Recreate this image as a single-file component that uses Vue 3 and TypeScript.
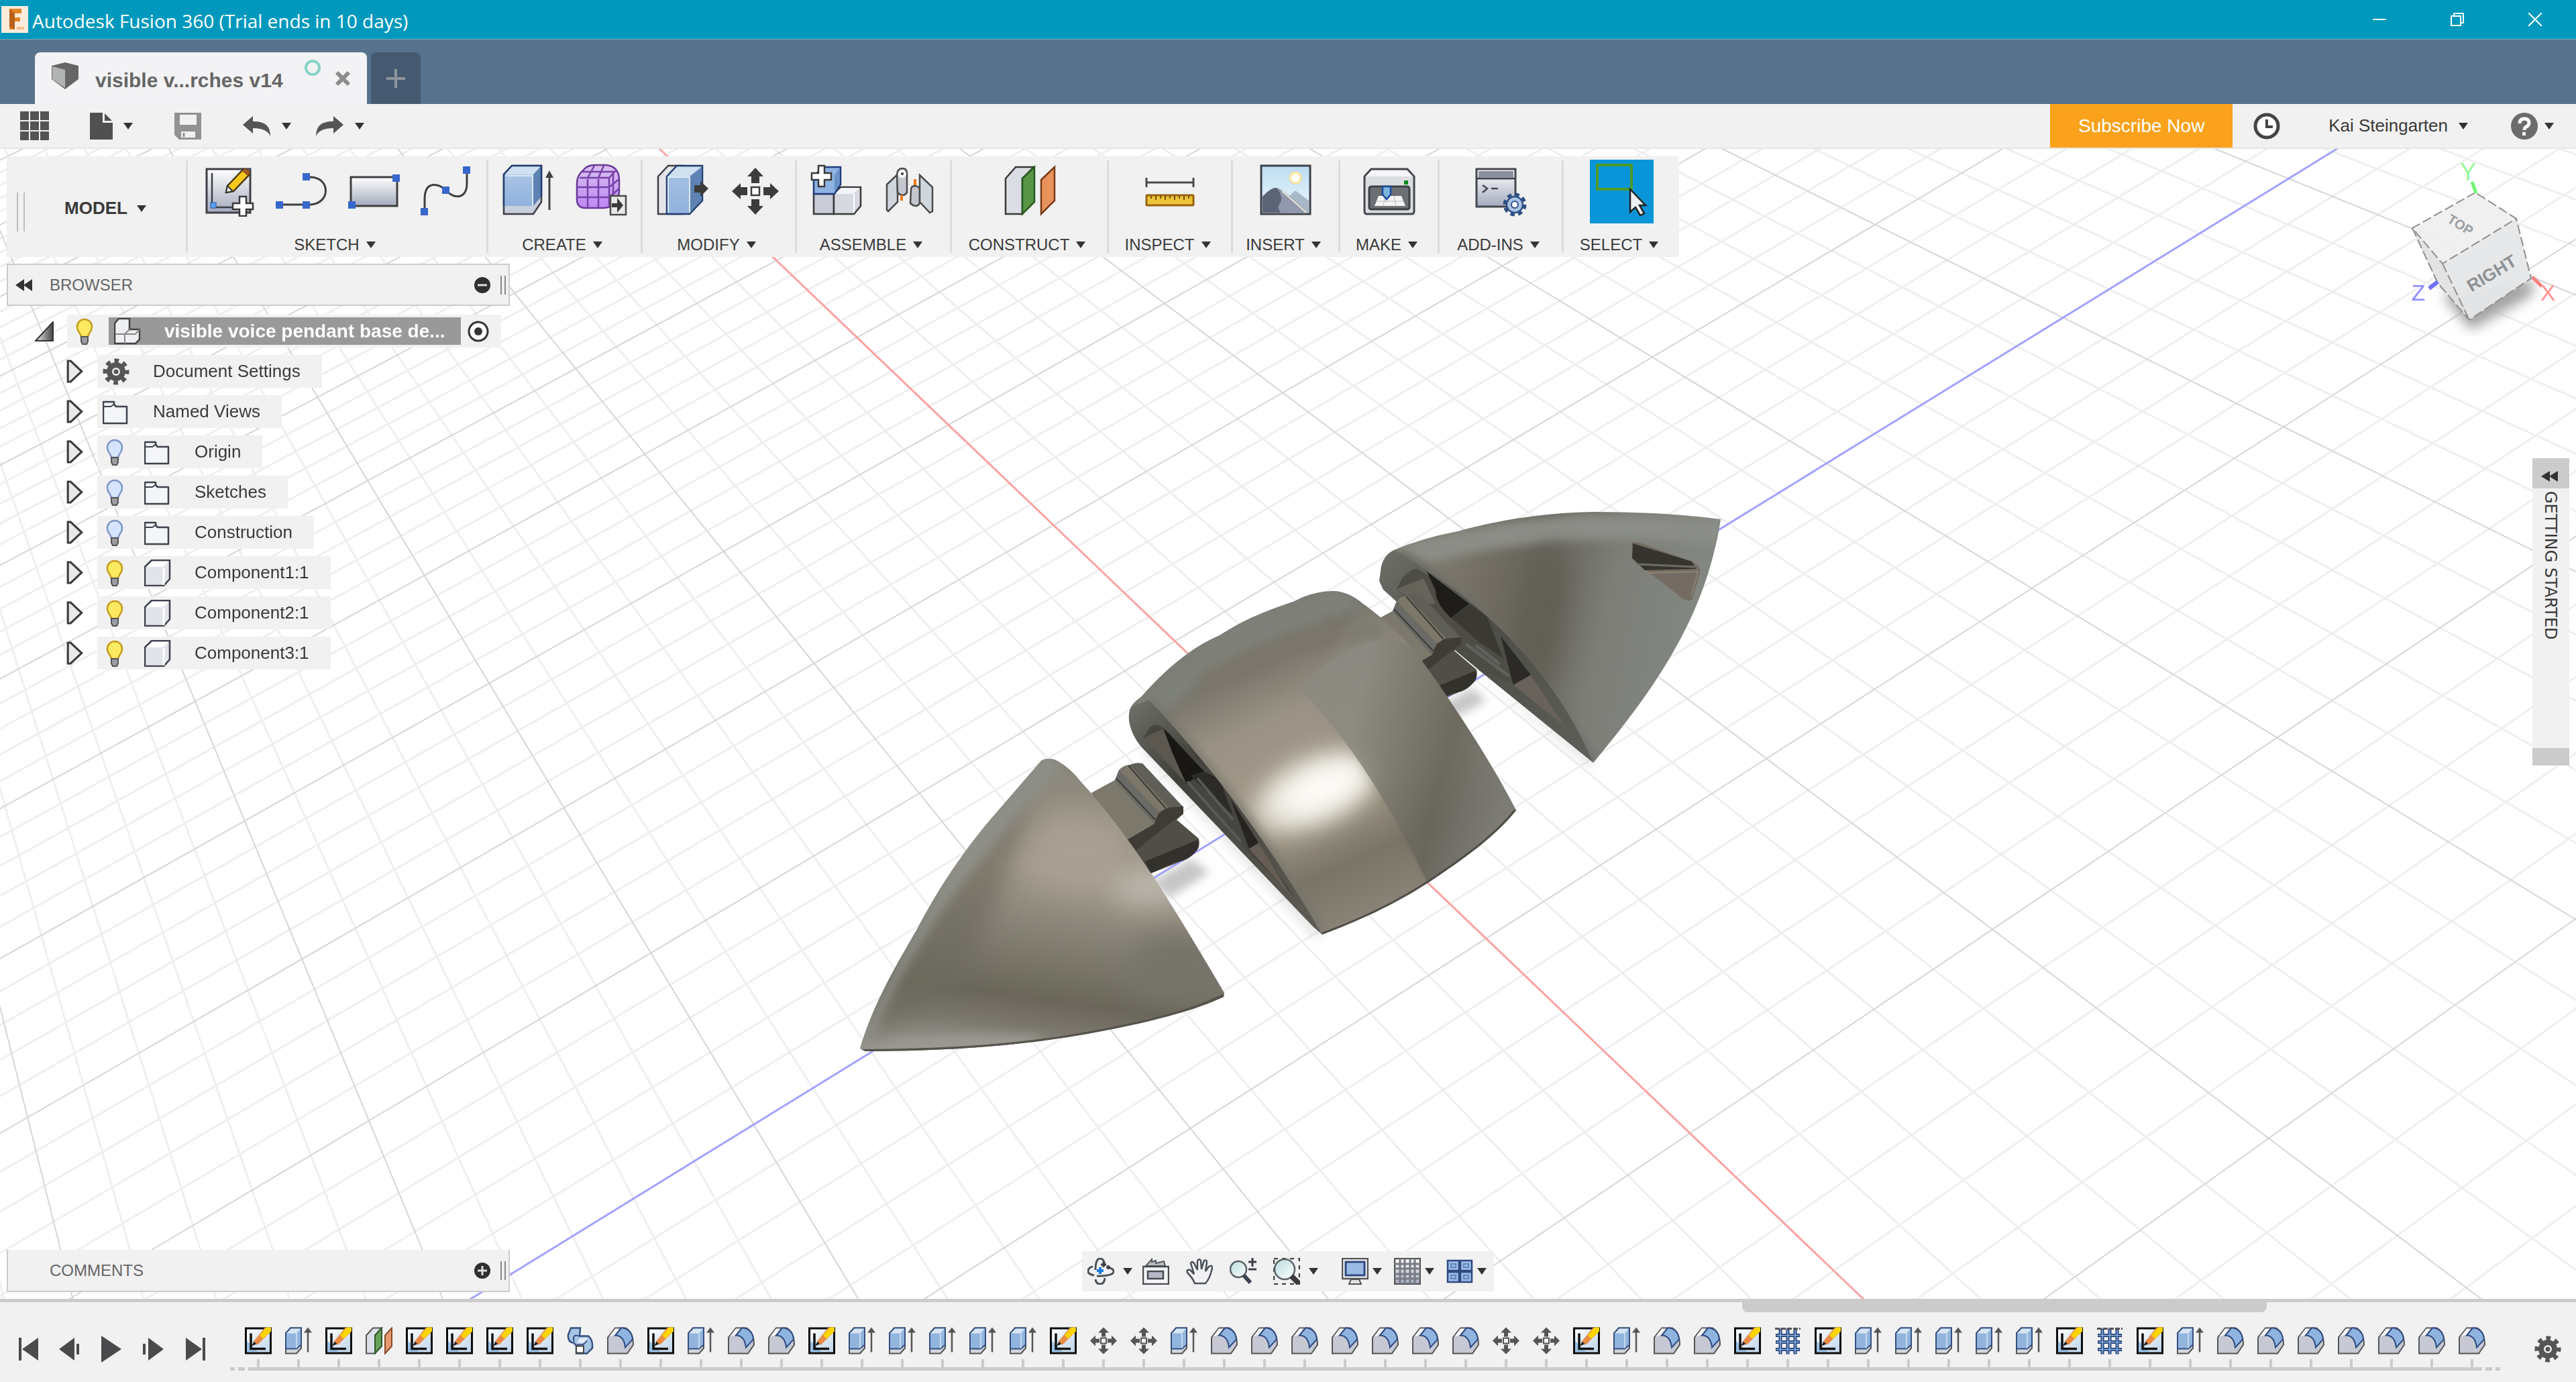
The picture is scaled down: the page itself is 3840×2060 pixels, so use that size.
<script setup lang="ts">
interface RibbonGroup {
  label: string
  width: number
  icons: string[]
  active?: boolean
}
interface TreeNode {
  label: string
  icon: string
  bulb?: 'on' | 'off'
}
interface GridLine {
  x1: number
  y1: number
  x2: number
  y2: number
  major: boolean
}

const groups: RibbonGroup[] = [
  { label: 'SKETCH', width: 448, icons: ['create-sketch', 'line', 'rect', 'spline'] },
  { label: 'CREATE', width: 230, icons: ['extrude', 'form'] },
  { label: 'MODIFY', width: 230, icons: ['press-pull', 'move'] },
  { label: 'ASSEMBLE', width: 231, icons: ['component', 'joint'] },
  { label: 'CONSTRUCT', width: 234, icons: ['plane'] },
  { label: 'INSPECT', width: 185, icons: ['measure'] },
  { label: 'INSERT', width: 160, icons: ['picture'] },
  { label: 'MAKE', width: 148, icons: ['printer'] },
  { label: 'ADD-INS', width: 185, icons: ['script'] },
  { label: 'SELECT', width: 175, icons: ['select'], active: true },
]

const nodes: TreeNode[] = [
  { label: 'Document Settings', icon: 'gear' },
  { label: 'Named Views', icon: 'folder' },
  { label: 'Origin', icon: 'folder', bulb: 'off' },
  { label: 'Sketches', icon: 'folder', bulb: 'off' },
  { label: 'Construction', icon: 'folder', bulb: 'off' },
  { label: 'Component1:1', icon: 'body', bulb: 'on' },
  { label: 'Component2:1', icon: 'body', bulb: 'on' },
  { label: 'Component3:1', icon: 'body', bulb: 'on' },
]

const featureNames: Record<string, string> = {
  s: 'sketch', e: 'extrude', p: 'plane', r: 'revolve', f: 'fillet', m: 'move', g: 'pattern',
}
const features = 'sespssssrfseffseeeeesmmefffffffmmseffsgseeeeesgsefffffff'
  .split('')
  .map((c) => featureNames[c])

const playback = ['first', 'previous', 'play', 'next', 'last']

// Ground grid in perspective: each family of lines runs to its own vanishing point.
const vpX = { x: -727, y: -1410 }
const vpZ = { x: 17608, y: -8478 }
const anchorY = 223
const anchor = (start: number, b: number, c: number, i: number) => (start + b * i) / (1 + c * i)

const gridLines: GridLine[] = []
for (let k = -23; k <= 26; k++) {
  if (k === 0) continue
  const ax = anchor(984, 348.2, -0.0702, k / 5)
  const t = (y: number) => vpX.x + ((ax - vpX.x) * (y - vpX.y)) / (anchorY - vpX.y)
  gridLines.push({ x1: t(200), y1: 200, x2: t(1960), y2: 1960, major: k % 5 === 0 })
}
for (let k = -58; k <= 20; k++) {
  if (k === 0) continue
  const ax = anchor(3482, 311.7, -0.0628, k / 5)
  const t = (x: number) => vpZ.y + ((anchorY - vpZ.y) * (x - vpZ.x)) / (ax - vpZ.x)
  gridLines.push({ x1: -20, y1: t(-20), x2: 3860, y2: t(3860), major: k % 5 === 0 })
}
const minorLines = gridLines.filter((l) => !l.major)
const majorLines = gridLines.filter((l) => l.major)
</script>

<template>
  <svg class="defs" aria-hidden="true">
    <defs>
      <linearGradient id="gSteel" x1="0" y1="0" x2="0" y2="1"><stop offset="0" stop-color="#fff" /><stop offset="1" stop-color="#a4aabd" /></linearGradient>
      <linearGradient id="gBlue" x1="0" y1="0" x2="0" y2="1"><stop offset="0" stop-color="#a9c4e4" /><stop offset="1" stop-color="#8fb1dc" /></linearGradient>
      <linearGradient id="gPurple" x1="0" y1="0" x2="0" y2="1"><stop offset="0" stop-color="#d9c2f0" /><stop offset="1" stop-color="#bd86f5" /></linearGradient>
      <linearGradient id="gSky" x1="0" y1="0" x2="0" y2="1"><stop offset="0" stop-color="#bcdcf2" /><stop offset="1" stop-color="#eef8fd" /></linearGradient>
      <linearGradient id="gPaper" x1="0" y1="0" x2="1" y2="1"><stop offset="0" stop-color="#fff" /><stop offset="1" stop-color="#bcd3ea" /></linearGradient>
      <linearGradient id="gLens" x1="0" y1="0" x2="1" y2="1"><stop offset="0" stop-color="#b8dcdc" /><stop offset="1" stop-color="#fff" /></linearGradient>
      <linearGradient id="gTri" x1="0" y1="0" x2="1" y2="0"><stop offset="0" stop-color="#eee" /><stop offset="1" stop-color="#444" /></linearGradient>
    </defs>

    <!-- ribbon icons -->
    <symbol id="r-create-sketch" viewBox="0 0 80 80">
      <rect x="7" y="9" width="65" height="65" fill="url(#gSteel)" stroke="#3f3f46" stroke-width="3" />
      <path d="M15 15V66H62" fill="none" stroke="#3f3f46" stroke-width="2.5" />
      <rect x="13" y="59" width="8" height="8" fill="#5aa0f0" stroke="#2456a8" />
      <path d="M36 44L38 34L62 9L71 17L47 42Z" fill="#f7c91d" stroke="#4a3a10" stroke-width="2.5" />
      <path d="M60 11L64 8Q68 8 72 15L69 19Z" fill="#a3592c" stroke="#4a3a10" stroke-width="1" />
      <path d="M36 44L38 34L46 42Z" fill="#fff" stroke="#333" stroke-width="2" />
      <path d="M56 50h10v10h10v9h-10v10h-10v-10h-10v-9h10z" fill="#fff" stroke="#3a3a3a" stroke-width="2.5" />
    </symbol>
    <symbol id="r-line" viewBox="0 0 80 80">
      <path d="M7 62H54C84 60 84 22 54 21H47" fill="none" stroke="#3f3f3f" stroke-width="3" />
      <path d="M42 15h11v11h-11zM2 57h11v11h-11zM42 57h11v11h-11z" fill="#3767cc" />
    </symbol>
    <symbol id="r-rect" viewBox="0 0 80 80">
      <rect x="6" y="21" width="69" height="43" fill="url(#gSteel)" stroke="#3f3f3f" stroke-width="3" />
      <path d="M68 17h11v11h-11zM2 57h11v11h-11z" fill="#3767cc" />
    </symbol>
    <symbol id="r-spline" viewBox="0 0 80 80">
      <path d="M8 72V54C8 26 28 30 39 40C54 56 71 52 71 30V10" fill="none" stroke="#3f3f3f" stroke-width="3" />
      <path d="M2 67h11v11h-11zM34 35h11v11h-11zM65 5h11v11h-11z" fill="#3767cc" />
    </symbol>
    <symbol id="r-extrude" viewBox="0 0 80 80">
      <path d="M3 17L15 4H59V58L47 76H3Z" fill="#c9cedb" stroke="#3c3f48" stroke-width="2.5" />
      <path d="M3 17H47V64H3Z" fill="url(#gBlue)" /><path d="M3 17L15 4H59L47 17Z" fill="#cfe0f0" />
      <path d="M47 17L59 4V50L47 64Z" fill="#5e82b4" />
      <path d="M3 64V17L15 4H59V50" fill="none" stroke="#233f70" stroke-width="2.5" />
      <path d="M6 19H46V64" fill="none" stroke="#dbe8f5" stroke-width="2" />
      <path d="M71 70V18" stroke="#444" stroke-width="3" /><path d="M65 22L71 11L77 22Z" fill="#444" />
    </symbol>
    <symbol id="r-form" viewBox="0 0 80 80">
      <path d="M4 30Q4 18 14 10Q20 3 30 3H46Q66 4 67 24V44Q66 52 58 60Q53 67 44 67H16Q5 67 4 56Z" fill="url(#gPurple)" stroke="#6a3a98" stroke-width="2.5" />
      <path d="M4 36H52V67M4 51H52M20 24V67M36 24V67M8 22H52Q52 30 52 36M52 22L63 10M20 22L30 4M36 22L44 4M52 36L67 24M52 51L67 38M58 14V56M12 13H60" fill="none" stroke="#7741a8" stroke-width="2.5" />
      <rect x="54" y="49" width="23" height="28" fill="#e9e9e9" stroke="#4a4a4a" stroke-width="2.5" />
      <path d="M56 60H64V52L73 63L64 74V66H56Z" fill="#3a3a3a" />
    </symbol>
    <symbol id="r-press-pull" viewBox="0 0 80 80">
      <path d="M3 20L18 4H40V76H3Z" fill="#e3e5ea" stroke="#3f3f46" stroke-width="2.5" />
      <path d="M16 20L31 4H69V56L50 76H16Z" fill="url(#gBlue)" stroke="#233f70" stroke-width="2.5" />
      <path d="M18 20L31 6H67L50 20Z" fill="#cfe0f0" /><path d="M50 20L68 6V55L50 74Z" fill="#5e82b4" />
      <path d="M18 74V21H50V74" fill="none" stroke="#dbe8f5" stroke-width="2" />
      <path d="M57 33H66V27L78 38L66 50V44H57Z" fill="#3a3a3a" />
    </symbol>
    <symbol id="r-move" viewBox="0 0 80 80">
      <path d="M40 7L52 20H46V30H34V20H28ZM40 77L52 64H46V54H34V64H28ZM5 42L18 30V36H28V48H18V54ZM75 42L62 30V36H52V48H62V54Z" fill="#3c3c3c" />
      <rect x="34" y="36" width="12" height="12" fill="#fff" stroke="#3c3c3c" stroke-width="2.5" />
    </symbol>
    <symbol id="r-component" viewBox="0 0 80 80">
      <path d="M5 46H35V76H5Z" fill="#c9ccd6" stroke="#3a3a3a" stroke-width="2.5" />
      <path d="M35 46L45 36H75V64L65 76H35Z" fill="#d6d9e0" stroke="#3a3a3a" stroke-width="2.5" /><path d="M36 46L46 37H73L64 46Z" fill="#f3f4f7" /><path d="M65 46V74" stroke="#fff" stroke-width="2" />
      <path d="M5 20L18 6H45V32L36 46H5Z" fill="#8fb3e2" stroke="#1f3c78" stroke-width="2.5" /><path d="M36 18L44 7V31L36 44Z" fill="#6c93c8" />
      <path d="M12 4h9v11h10v10h-10v10h-9v-10h-10v-10h10z" fill="#fff" stroke="#3a3a3a" stroke-width="2.5" />
    </symbol>
    <symbol id="r-joint" viewBox="0 0 80 80">
      <path d="M6 32L22 17V58L8 72L6 70Z" fill="#cfd6dc" stroke="#4a4a4a" stroke-width="2.5" />
      <path d="M21 17Q22 8 29 8Q36 8 36 16V44Q30 52 22 44Z" fill="#c4c8ce" stroke="#4a4a4a" stroke-width="2.5" /><circle cx="29" cy="16" r="6" fill="#fff" /><circle cx="29" cy="16" r="2" fill="#333" />
      <path d="M28 48V56M48 24V38" stroke="#f07a1a" stroke-width="4" />
      <path d="M42 40Q42 34 48 34Q55 35 55 40V60Q50 68 41 60Z" fill="#c4c8ce" stroke="#4a4a4a" stroke-width="2.5" />
      <path d="M55 18L74 36V72L70 74L55 58Z" fill="#cfd6dc" stroke="#4a4a4a" stroke-width="2.5" />
    </symbol>
    <symbol id="r-plane" viewBox="0 0 80 80">
      <path d="M4 23L19 6H46L29 23V76H4Z" fill="#dadde3" stroke="#3a3a3a" stroke-width="2.5" />
      <path d="M29 23L47 6V58L29 76Z" fill="#5a9646" stroke="#275a20" stroke-width="2.5" />
      <path d="M57 25L77 6V56L57 76Z" fill="#e8925c" stroke="#7a3a18" stroke-width="2.5" />
    </symbol>
    <symbol id="r-measure" viewBox="0 0 80 80">
      <path d="M5 22V36M75 22V36M5 29H75" stroke="#4a4a4a" stroke-width="3" />
      <rect x="5" y="48" width="70" height="15" rx="1" fill="#ecc53a" stroke="#99630e" stroke-width="3" />
      <path d="M12 49v4M19 49v6M26 49v4M33 49v6M40 49v4M47 49v6M54 49v4M61 49v6M68 49v4" stroke="#7a4d08" stroke-width="2" />
    </symbol>
    <symbol id="r-picture" viewBox="0 0 80 80">
      <rect x="3" y="4" width="73" height="72" fill="url(#gSky)" stroke="#3c4048" stroke-width="3" />
      <circle cx="54" cy="22" r="8" fill="#fff" stroke="#fbe39a" stroke-width="3" />
      <path d="M44 50L54 41L74 56V74H44Z" fill="#a9b8c6" />
      <path d="M5 50Q18 36 26 37Q38 40 72 74H5Z" fill="#8f98ac" /><path d="M5 50Q18 36 26 37Q34 46 33 56L28 66L32 74H5Z" fill="#5d6475" />
      <path d="M34 42Q50 55 70 74" fill="none" stroke="#f2ecd8" stroke-width="2" />
    </symbol>
    <symbol id="r-printer" viewBox="0 0 80 80">
      <path d="M3 20L13 9H67L77 20V72Q77 76 73 76H7Q3 76 3 72Z" fill="#dcdde0" stroke="#43474f" stroke-width="3" />
      <path d="M5 20L14 11H66L75 20Z" fill="#f6f6fa" /><rect x="62" y="26" width="6" height="6" fill="#0a8a1a" />
      <rect x="10" y="35" width="60" height="34" rx="3" fill="#6c6f73" stroke="#3c4046" stroke-width="3" />
      <path d="M24 49H58L64 64H18Z" fill="#f4f4f4" /><path d="M21 57H61M34 49L31 64M47 49L50 64" stroke="#bbb" stroke-width="1" />
      <path d="M30 35H42V47L36 54L30 47Z" fill="#7db5dc" stroke="#1c4aa0" stroke-width="2.5" />
    </symbol>
    <symbol id="r-script" viewBox="0 0 80 80">
      <rect x="4" y="9" width="58" height="56" fill="url(#gSteel)" stroke="#44474f" stroke-width="3" />
      <rect x="7" y="12" width="52" height="9" fill="#8b90a0" /><path d="M4 23H62" stroke="#44474f" stroke-width="3" />
      <path d="M13 33L20 38L13 44M26 38H36" fill="none" stroke="#44474f" stroke-width="2.5" />
      <circle cx="61" cy="62" r="14" fill="none" stroke="#2f4f86" stroke-width="7" stroke-dasharray="6 5" />
      <circle cx="61" cy="62" r="12" fill="#a9c3e4" stroke="#2f4f86" stroke-width="2.5" /><circle cx="61" cy="62" r="5" fill="#fff" stroke="#2f4f86" stroke-width="2" />
    </symbol>
    <symbol id="r-select" viewBox="0 0 80 80">
      <rect x="4" y="3" width="51" height="36" fill="none" stroke="#4e9a2a" stroke-width="4" />
      <path d="M53 39V73L61 66L68 78L74 75L67 63H76Z" fill="#eceef4" stroke="#222" stroke-width="2.5" />
    </symbol>

    <!-- timeline icons -->
    <symbol id="t-sketch" viewBox="0 0 40 40">
      <rect x="1.5" y="1.5" width="37" height="37" fill="url(#gPaper)" stroke="#0c0c0c" stroke-width="3" />
      <path d="M3 20L20 37H3Z" fill="#6aa5dc" opacity=".6" /><path d="M9 9V32H31" fill="none" stroke="#111" stroke-width="3.5" />
      <path d="M10 28L14 20L22 23Z" fill="#222" /><path d="M13 21L30 0L38 7L19 26Z" fill="#e98b45" /><path d="M22 12L32 0H39V6L27 17Z" fill="#fbd500" />
    </symbol>
    <symbol id="t-extrude" viewBox="0 0 40 40">
      <path d="M1 9L8 1H24V31L17 39H1Z" fill="#d3d7e0" stroke="#555" stroke-width="2" />
      <path d="M1 9L8 1H24V26L17 32H1Z" fill="#92b5de" stroke="#35507f" stroke-width="2" /><path d="M2 9L9 2H23L17 9Z" fill="#d8e6f4" /><path d="M17 9V31" stroke="#d8e6f4" stroke-width="1.5" />
      <path d="M34 37V6" stroke="#555" stroke-width="2.5" /><path d="M28 8L34 0L40 8Z" fill="#555" />
    </symbol>
    <symbol id="t-plane" viewBox="0 0 40 40">
      <path d="M1 12L11 1H24L14 12V39H1Z" fill="#dcdfe8" stroke="#555" stroke-width="2" /><path d="M14 12L24 1V28L14 39Z" fill="#68a05a" stroke="#2c5a28" stroke-width="2" />
      <path d="M29 12L39 1V28L29 39Z" fill="#e89b70" stroke="#8a4a28" stroke-width="2" />
    </symbol>
    <symbol id="t-revolve" viewBox="0 0 40 40">
      <path d="M6 1H20L19 13H32Q39 18 38 31L30 39H14V27L10 23Q1 22 2 11Z" fill="#a9c5e6" stroke="#35507f" stroke-width="2.5" />
      <path d="M11 21Q8 14 13 12L19 13M15 26H24L30 20" fill="none" stroke="#35507f" stroke-width="2" /><path d="M20 16H31L26 23H15Z" fill="#e3eef8" />
      <rect x="14" y="28" width="11" height="10" fill="#fff" stroke="#444" stroke-width="2" />
    </symbol>
    <symbol id="t-fillet" viewBox="0 0 40 40">
      <path d="M1 15L12 1H28Q39 8 39 26L30 39H1Z" fill="#c6c9d4" stroke="#555" stroke-width="2" /><path d="M3 14L12 2H18L12 11Z" fill="#f4f4f6" />
      <path d="M12 12Q25 12 27 30L38 18Q37 4 24 1H21Z" fill="#8fb4e0" stroke="#2f4a80" stroke-width="2" />
    </symbol>
    <symbol id="t-move" viewBox="0 0 40 40">
      <path d="M20 0L28 8H23V14H17V8H12ZM20 40L28 32H23V26H17V32H12ZM0 20L8 12V17H14V23H8V28ZM40 20L32 12V17H26V23H32V28Z" fill="#555" />
      <rect x="16" y="16" width="8" height="8" fill="#f4f4f4" stroke="#555" stroke-width="2" />
    </symbol>
    <symbol id="t-pattern" viewBox="0 0 40 40">
      <path d="M9 2V40M20 2V40M31 2V40M2 12H38M2 22H38M2 33H38" stroke="#24427c" stroke-width="5" /><path d="M9 4V39M20 4V39M31 4V39M3 12H37M3 22H37M3 33H37" stroke="#8db2e0" stroke-width="1.5" />
      <path d="M1 2H39" stroke="#555" stroke-width="3" stroke-dasharray="7 2" />
    </symbol>

    <!-- playback -->
    <symbol id="p-first" viewBox="0 0 40 40"><path d="M6 3h4v34h-4zM11 20L35 3V37Z" fill="#4a4a4c" /></symbol>
    <symbol id="p-previous" viewBox="0 0 40 40"><path d="M4 20L27 3V37ZM30 12h4v16h-4z" fill="#4a4a4c" /></symbol>
    <symbol id="p-play" viewBox="0 0 40 40"><path d="M5 0L35 20L5 40Z" fill="#4a4a4c" /></symbol>
    <symbol id="p-next" viewBox="0 0 40 40"><path d="M36 20L13 3V37ZM5 12h4v16h-4z" fill="#4a4a4c" /></symbol>
    <symbol id="p-last" viewBox="0 0 40 40"><path d="M32 3h4v34h-4zM31 20L7 3V37Z" fill="#4a4a4c" /></symbol>

    <!-- browser icons -->
    <symbol id="b-gear" viewBox="0 0 40 40">
      <circle cx="20" cy="20" r="16" fill="none" stroke="#555" stroke-width="7" stroke-dasharray="6.5 6.07" stroke-dashoffset="3" />
      <circle cx="20" cy="20" r="10" fill="none" stroke="#555" stroke-width="8" /><circle cx="20" cy="20" r="3.5" fill="#555" />
    </symbol>
    <symbol id="b-folder" viewBox="0 0 40 40"><path d="M1 5H17V9L20 12H36V37H1Z" fill="#f4f5f8" stroke="#3e424c" stroke-width="2.5" stroke-linejoin="round" /><path d="M2 12H12L18 8" fill="none" stroke="#3e424c" stroke-width="2" /></symbol>
    <symbol id="b-body" viewBox="0 0 40 40"><path d="M1 11L11 1H38V29L29 39H1Z" fill="#e2e4e9" stroke="#3e424c" stroke-width="2.5" /><path d="M3 11L12 3H36L28 11Z" fill="#fff" /><path d="M29 12V38" stroke="#fff" stroke-width="3" /></symbol>
    <symbol id="b-asm" viewBox="0 0 40 40"><path d="M1 8L7 1H23V17H38V32L32 38H1Z" fill="#eeeff2" stroke="#444" stroke-width="2.5" /><path d="M16 38V24L23 17M17 24H32L38 17M2 24H16" fill="none" stroke="#888" stroke-width="2" /></symbol>
    <symbol id="b-on" viewBox="0 0 40 40"><path d="M18 2a11 11 0 0 1 11 12c0 6-5 8-6 14h-10c-1-6-6-8-6-14a11 11 0 0 1 11-12z" fill="#fdea62" stroke="#c69a1c" stroke-width="2.5" /><path d="M13 28h10v7l-2 4h-6l-2-4z" fill="#9a9da4" stroke="#555" stroke-width="2" /></symbol>
    <symbol id="b-off" viewBox="0 0 40 40"><path d="M18 2a11 11 0 0 1 11 12c0 6-5 8-6 14h-10c-1-6-6-8-6-14a11 11 0 0 1 11-12z" fill="#d6e4ff" stroke="#7d97c8" stroke-width="2.5" /><path d="M13 28h10v7l-2 4h-6l-2-4z" fill="#9a9da4" stroke="#555" stroke-width="2" /></symbol>
  </svg>

  <div class="app">
    <header class="titlebar">
      <svg class="logo" viewBox="0 0 40 40"><rect width="40" height="40" fill="#fdebdc" /><path d="M12 4H30V11H20V17H28V23H20V35H12Z" fill="#e08526" /><path d="M12 4L20 11V35L12 30Z" fill="#b8601a" /><path d="M23 31h11v4h-11z" fill="#f6bf8e" /></svg>
      <h1>Autodesk Fusion 360 (Trial ends in 10 days)</h1>
      <div class="window-buttons">
        <button aria-label="Minimize"><svg viewBox="0 0 20 20"><path d="M0 10H20" stroke="#fff" stroke-width="2" /></svg></button>
        <button aria-label="Restore"><svg viewBox="0 0 20 20"><path d="M1 5H15V19H1ZM5 5V1H19V15H15" fill="none" stroke="#fff" stroke-width="2" /></svg></button>
        <button aria-label="Close"><svg viewBox="0 0 20 20"><path d="M0 0L20 20M20 0L0 20" stroke="#fff" stroke-width="2" /></svg></button>
      </div>
    </header>

    <nav class="tabs">
      <div class="tab">
        <svg class="cube" viewBox="0 0 40 40"><path d="M0 5L20 0L40 5V25L20 40L0 25Z" fill="#666" /><path d="M1 6L20 11V38L1 25Z" fill="#b2b4b4" /></svg>
        <span class="tab-name">visible v...rches v14</span>
        <svg class="sync" viewBox="0 0 26 26"><circle cx="13" cy="13" r="10" fill="none" stroke="#86d2c4" stroke-width="4" /></svg>
        <button class="tab-close" aria-label="Close tab"><svg viewBox="0 0 24 24"><path d="M3 3L21 21M21 3L3 21" stroke="#8c8c8c" stroke-width="6" /></svg></button>
      </div>
      <button class="tab-add" aria-label="New tab"><svg viewBox="0 0 28 28"><path d="M14 0V28M0 14H28" stroke="#8e959d" stroke-width="4" /></svg></button>
    </nav>

    <div class="toolbar">
      <button class="tool apps" aria-label="Data panel"><svg width="44" height="44" viewBox="0 0 44 44"><path d="M0 0h13v13h-13zM15 0h13v13h-13zM30 0h13v13h-13zM0 15h13v13h-13zM15 15h13v13h-13zM30 15h13v13h-13zM0 30h13v13h-13zM15 30h13v13h-13zM30 30h13v13h-13z" fill="#545454" /></svg></button>
      <button class="tool file" aria-label="File"><svg width="34" height="40" viewBox="0 0 34 40"><path d="M0 0H19V15H34V40H0ZM22 1L33 12H22Z" fill="#505050" /></svg><i class="caret"></i></button>
      <button class="tool save" aria-label="Save"><svg width="40" height="40" viewBox="0 0 40 40"><path fill-rule="evenodd" d="M0 0H40V40H7L0 33ZM8 3V18H33V3ZM10 28V37H31V28Z" fill="#929292" /><path d="M14 30v6" stroke="#929292" stroke-width="3" /></svg></button>
      <button class="tool undo" aria-label="Undo"><svg width="42" height="32" viewBox="0 0 42 32"><path d="M0 14L15 1V9Q41 8 41 31Q36 19 15 19V27Z" fill="#555" /></svg><i class="caret"></i></button>
      <button class="tool redo" aria-label="Redo"><svg width="42" height="32" viewBox="0 0 42 32"><path d="M41 14L26 1V9Q0 8 0 31Q5 19 26 19V27Z" fill="#555" /></svg><i class="caret"></i></button>
      <div class="account">
        <button class="subscribe">Subscribe Now</button>
        <button class="tool clock" aria-label="Job status"><svg width="40" height="40" viewBox="0 0 40 40"><circle cx="20" cy="20" r="17" fill="#fff" stroke="#444" stroke-width="5" /><path d="M20 10V21H29" fill="none" stroke="#444" stroke-width="4" /></svg></button>
        <button class="tool user">Kai Steingarten<i class="caret"></i></button>
        <button class="tool help" aria-label="Help"><svg width="40" height="40" viewBox="0 0 40 40"><circle cx="20" cy="20" r="20" fill="#6c6c6c" /><path d="M13 16Q13 9 20 9Q27 9 27 15Q27 19 23 21Q20 22 20 26" fill="none" stroke="#fff" stroke-width="5" /><rect x="17" y="29" width="5" height="5" fill="#fff" /></svg><i class="caret"></i></button>
      </div>
    </div>

    <main class="stage">
      <svg class="scene" viewBox="0 222 3840 1714" preserveAspectRatio="xMidYMid slice" role="img" aria-label="Model view">
        <defs>
          <filter id="b8" x="-50%" y="-50%" width="200%" height="200%"><feGaussianBlur stdDeviation="7" /></filter>
          <filter id="b20" x="-80%" y="-80%" width="260%" height="260%"><feGaussianBlur stdDeviation="18" /></filter>
          <linearGradient id="cone" gradientUnits="userSpaceOnUse" x1="1560" y1="1140" x2="1500" y2="1570">
            <stop offset="0" stop-color="#8a867a" /><stop offset=".35" stop-color="#a69d90" /><stop offset=".55" stop-color="#898478" /><stop offset=".8" stop-color="#6a665a" /><stop offset=".9" stop-color="#7b776d" /><stop offset="1" stop-color="#94928a" />
          </linearGradient>
          <linearGradient id="mid" gradientUnits="userSpaceOnUse" x1="1860" y1="930" x2="2060" y2="1370">
            <stop offset="0" stop-color="#7c7e76" /><stop offset=".12" stop-color="#78746a" /><stop offset=".3" stop-color="#9a9285" /><stop offset=".6" stop-color="#a39a88" /><stop offset=".8" stop-color="#7a7467" /><stop offset="1" stop-color="#8c867a" />
          </linearGradient>
          <linearGradient id="midR" gradientUnits="userSpaceOnUse" x1="2010" y1="1100" x2="2250" y2="1160">
            <stop offset="0" stop-color="#8b8981" /><stop offset=".3" stop-color="#79766c" /><stop offset=".6" stop-color="#66635a" /><stop offset="1" stop-color="#7c7d76" />
          </linearGradient>
          <linearGradient id="tail" gradientUnits="userSpaceOnUse" x1="2150" y1="880" x2="2520" y2="960">
            <stop offset="0" stop-color="#7c776c" /><stop offset=".35" stop-color="#66625a" /><stop offset=".65" stop-color="#7c7e77" /><stop offset="1" stop-color="#838781" />
          </linearGradient>
          <linearGradient id="face" gradientUnits="userSpaceOnUse" x1="1690" y1="1050" x2="1960" y2="1380"><stop offset="0" stop-color="#6b6d66" /><stop offset=".3" stop-color="#40403a" /><stop offset="1" stop-color="#5e5c54" /></linearGradient>
          <linearGradient id="face2" gradientUnits="userSpaceOnUse" x1="2060" y1="830" x2="2370" y2="1130"><stop offset="0" stop-color="#6b6d66" /><stop offset=".4" stop-color="#4b4c46" /><stop offset="1" stop-color="#5e5f58" /></linearGradient>
          <clipPath id="coneClip"><path d="M1282 1563C1300 1500 1335 1440 1366 1387C1400 1322 1440 1262 1489 1207L1552 1134Q1558 1129 1572 1132C1590 1141 1602 1153 1611 1165C1690 1250 1760 1370 1825 1480L1824 1486C1780 1506 1740 1515 1709 1523C1600 1548 1490 1566 1290 1567Z" /></clipPath>
          <clipPath id="midClip"><path d="M1686 1054Q1690 1046 1701 1039C1735 1000 1775 965 1818 947C1860 920 1890 910 1930 896Q1955 882 1985 881Q2008 880 2032 900C2080 935 2100 960 2118 983C2160 1040 2220 1130 2260 1208C2230 1245 2190 1275 2130 1315C2080 1348 2020 1375 1971 1393Q1860 1200 1713 1043Z" /></clipPath>
          <clipPath id="tailClip"><path d="M2078 820Q2120 802 2173 792Q2270 765 2375 763Q2480 763 2565 774C2545 900 2490 1000 2375 1137Q2290 940 2078 820Z" /></clipPath>
          <g id="clip">
            <path d="M1627 1182L1662 1163L1668 1148Q1680 1138 1703 1138L1764 1205V1213L1754 1222L1787 1250Q1790 1262 1782 1270L1758 1285L1715 1302L1690 1280Z" fill="#504e46" />
            <path d="M1627 1182L1662 1163L1721 1228L1680 1252Z" fill="#7c786b" />
            <path d="M1662 1163L1668 1148L1728 1210L1721 1228Z" fill="#6a6a66" />
            <path d="M1668 1148Q1675 1140 1684 1140L1742 1204L1728 1211Z" fill="#7d7769" />
            <path d="M1684 1140Q1694 1136 1703 1138L1764 1203L1742 1204Z" fill="#5f5f58" />
            <path d="M1664 1160L1722 1222M1682 1141L1738 1205" stroke="#3c3a36" stroke-width="2" />
            <path d="M1680 1252L1721 1228Q1726 1208 1742 1204L1764 1202V1213Q1745 1225 1693 1268Z" fill="#3f3b35" />
            <path d="M1707 1284L1785 1252Q1790 1262 1782 1270Q1770 1284 1752 1285L1715 1302Z" fill="#33312c" />
          </g>
        </defs>

        <rect x="0" y="222" width="3840" height="1714" fill="#fff" />
        <g stroke="#efefef" stroke-width="3"><line v-for="(l, i) in minorLines" :key="i" :x1="l.x1" :y1="l.y1" :x2="l.x2" :y2="l.y2" /></g>
        <g stroke="#d6d6d6" stroke-width="2"><line v-for="(l, i) in majorLines" :key="i" :x1="l.x1" :y1="l.y1" :x2="l.x2" :y2="l.y2" /></g>
        <g filter="url(#b8)" fill="#c6c6c6">
          <path d="M1715 1315L1775 1280L1803 1300L1745 1338Z" /><path d="M2150 1050L2195 1025L2215 1045L2170 1070Z" />
          <path d="M1700 1120L1960 1400L1975 1392L1720 1110Z" opacity=".4" /><path d="M2200 1000L2370 1145L2380 1130Z" opacity=".4" />
        </g>
        <line x1="676" y1="1952" x2="3490" y2="218" stroke="#a2a2ff" stroke-width="3" />
        <line x1="974" y1="213" x2="2790" y2="1948" stroke="#ffa2a2" stroke-width="3" />

        <!-- tail piece -->
        <path d="M2056 866L2059 844Q2064 826 2078 820L2120 810Q2310 930 2375 1137L2206 1000L2081 896L2062 879Z" fill="url(#face2)" />
        <path d="M2082 878L2090 862Q2105 846 2114 848L2216 918L2240 970L2282 1005L2334 1084L2262 1020L2206 1000Z" fill="#4d4c45" />
        <path d="M2127 852L2190 900L2163 921Q2140 900 2140 880Z" fill="#1d1c19" /><path d="M2163 921L2190 900L2216 918L2240 980L2206 958Z" fill="#3b3934" />
        <path d="M2082 878L2122 862L2140 900L2110 900Z" fill="#66635a" /><path d="M2237 948L2282 1006L2256 1021Z" fill="#2c2a27" /><path d="M2256 1021L2282 1006L2334 1084Z" fill="#68625a" />
        <path d="M2185 960L2250 1008M2200 962L2236 990" stroke="#5f625c" stroke-width="5" />
        <g clip-path="url(#tailClip)">
          <rect x="2050" y="750" width="530" height="400" fill="url(#tail)" />
          <path d="M2070 815Q2280 765 2380 768L2570 778V810Q2300 790 2130 840Z" fill="#8b8e87" filter="url(#b8)" />
          <path d="M2080 825Q2230 900 2375 1140" fill="none" stroke="#6a6b65" stroke-width="14" filter="url(#b8)" />
          <ellipse cx="2300" cy="930" rx="34" ry="120" fill="#625e54" filter="url(#b20)" transform="rotate(10 2300 930)" />
        </g>
        <path d="M2433 809Q2440 806 2450 811L2520 836Q2536 842 2534 854L2523 893Q2517 898 2508 892L2454 850L2433 832Z" fill="#746c62" />
        <path d="M2434 810L2522 837L2528 848L2452 850L2433 832Z" fill="#36342f" /><path d="M2440 841L2526 845" stroke="#6d6d65" stroke-width="3" /><path d="M2455 854L2531 852L2521 890" fill="none" stroke="#8d8375" stroke-width="2" />
        <use href="#clip" x="414" y="-252" />

        <!-- centre piece -->
        <path d="M1683 1074Q1682 1060 1686 1054L1701 1039L1740 1050Q1880 1200 1971 1393L1958 1382L1701 1113Q1686 1095 1683 1074Z" fill="url(#face)" />
        <path d="M1704 1100L1714 1084Q1724 1076 1735 1086L1818 1161L1840 1205L1876 1262L1931 1338L1860 1270L1770 1170Z" fill="#474540" />
        <path d="M1735 1086L1795 1150L1769 1168L1750 1130Z" fill="#181714" /><path d="M1704 1100L1733 1087L1766 1165Z" fill="#5c584f" />
        <path d="M1774 1156L1795 1150L1818 1161L1838 1215Z" fill="#2d2b27" /><path d="M1834 1190L1876 1256L1862 1265Z" fill="#262420" /><path d="M1862 1265L1876 1257L1925 1336Z" fill="#665d55" />
        <path d="M1770 1165L1850 1255M1785 1160L1838 1222" stroke="#565b56" stroke-width="4" />
        <g clip-path="url(#midClip)">
          <rect x="1670" y="870" width="600" height="540" fill="url(#mid)" />
          <path d="M1690 1045L1820 945L2000 880L2030 905Q1850 950 1730 1070Z" fill="#7e8179" filter="url(#b8)" />
          <path d="M1780 1010Q1900 940 2050 925L2060 950Q1900 970 1800 1030Z" fill="#7b766a" filter="url(#b8)" />
          <ellipse cx="1960" cy="1180" rx="95" ry="48" fill="#e9e5db" filter="url(#b20)" transform="rotate(-24 1960 1180)" />
          <ellipse cx="1972" cy="1174" rx="66" ry="26" fill="#fffefa" filter="url(#b20)" transform="rotate(-24 1972 1174)" />
          <path d="M1950 1038Q2040 1130 2130 1320L2280 1250V1150L2100 930L2030 900L1990 960Z" fill="url(#midR)" filter="url(#b8)" opacity=".35" />
          <path d="M1940 1030Q2040 1130 2130 1320L2280 1250V1150L2130 980Q2080 940 2030 960Q1960 990 1940 1030Z" fill="url(#midR)" opacity=".8" />
          <path d="M1713 1043Q1860 1200 1971 1393" fill="none" stroke="#74736a" stroke-width="10" filter="url(#b8)" />
          <path d="M2260 1208C2230 1245 2190 1275 2130 1315C2080 1348 2020 1375 1971 1393" fill="none" stroke="#4f4d47" stroke-width="6" />
        </g>

        <!-- nose piece -->
        <use href="#clip" />
        <g clip-path="url(#coneClip)">
          <rect x="1270" y="1120" width="570" height="460" fill="url(#cone)" />
          <path d="M1290 1560Q1340 1390 1540 1170Q1500 1350 1420 1470Z" fill="#6e6a5f" opacity=".7" filter="url(#b20)" />
          <ellipse cx="1610" cy="1270" rx="70" ry="56" fill="#a99f92" filter="url(#b20)" />
          <ellipse cx="1715" cy="1322" rx="60" ry="26" fill="#b9b6aa" filter="url(#b20)" transform="rotate(-8 1715 1322)" />
          <ellipse cx="1760" cy="1440" rx="80" ry="50" fill="#77736a" filter="url(#b20)" />
          <path d="M1278 1570Q1340 1400 1489 1200L1560 1125L1580 1145Q1480 1250 1410 1345Q1340 1450 1290 1560Z" fill="#8d8f88" filter="url(#b8)" />
          <path d="M1285 1560Q1420 1535 1560 1545L1500 1570H1285Z" fill="#9a9891" filter="url(#b8)" />
          <path d="M1825 1484C1780 1506 1740 1515 1709 1523C1600 1548 1490 1566 1285 1567" fill="none" stroke="#55534c" stroke-width="6" />
        </g>
      </svg>

      <svg class="viewcube" viewBox="3560 222 280 280" role="img" aria-label="View cube">
        <defs><filter id="vb" x="-30%" y="-30%" width="160%" height="160%"><feGaussianBlur stdDeviation="9" /></filter></defs>
        <path d="M3640 440L3684 492L3775 440L3775 415Z" fill="#a4a4a4" filter="url(#vb)" />
        <path d="M3690 287L3596 340L3641 393L3751 326Z" fill="#efefef" opacity=".93" />
        <path d="M3596 340L3641 393L3681 477L3632 420Z" fill="#e2e2e2" opacity=".95" />
        <path d="M3641 393L3751 326L3773 415L3681 477Z" fill="#e6e7e8" opacity=".95" />
        <path d="M3690 287L3596 340L3641 393L3751 326ZM3596 340L3634 422L3681 477L3773 415L3751 326M3641 393L3681 477" fill="none" stroke="#8f8f8f" stroke-width="2" stroke-dasharray="14 5" />
        <path d="M3685 271L3691 288" stroke="#73f573" stroke-width="5" /><path d="M3621 430L3634 420" stroke="#7272fa" stroke-width="6" /><path d="M3775 413L3789 427" stroke="#fa8080" stroke-width="5" />
        <g font-family="Liberation Sans, Arial, sans-serif" text-anchor="middle">
          <text x="3679" y="269" font-size="36" fill="#97f797">Y</text><text x="3605" y="448" font-size="34" fill="#8c8cff">Z</text><text x="3798" y="448" font-size="34" fill="#ff9292">X</text>
          <text transform="translate(3719 415) rotate(-31)" font-size="26" font-weight="700" fill="#8e9196">RIGHT</text>
          <text transform="translate(3664 341) rotate(32)" font-size="20" font-weight="700" fill="#9b9ea3">TOP</text>
        </g>
      </svg>

      <section class="ribbon" aria-label="Ribbon">
        <div class="workspace"><span class="grip"></span><button class="model">MODEL<i class="caret"></i></button></div>
        <div v-for="g in groups" :key="g.label" class="group" :style="{ width: g.width + 'px' }">
          <div class="group-icons">
            <button v-for="icon in g.icons" :key="icon" :class="['big', { active: g.active }]" :aria-label="icon"><svg><use :href="'#r-' + icon" /></svg></button>
          </div>
          <button class="group-label">{{ g.label }}<i class="caret"></i></button>
        </div>
      </section>

      <section class="panel browser">
        <button class="collapse" aria-label="Collapse"><svg width="26" height="18" viewBox="0 0 26 18"><path d="M0 9L13 0V18ZM12 9L25 0V18Z" fill="#333" /></svg></button>
        <h2>BROWSER</h2>
        <button class="round" aria-label="Minimize browser"><svg width="24" height="24" viewBox="0 0 24 24"><circle cx="12" cy="12" r="12" fill="#2f2f2f" /><path d="M5 12H19" stroke="#ddd" stroke-width="3" /></svg></button>
        <span class="handle"></span>
      </section>

      <ul class="tree">
        <li class="root">
          <svg class="open" viewBox="0 0 28 30"><path d="M1 29L27 1V29Z" fill="url(#gTri)" stroke="#333" stroke-width="2" /></svg>
          <div class="node">
            <svg class="ico"><use href="#b-on" /></svg>
            <span class="chosen"><svg class="ico"><use href="#b-asm" /></svg><b>visible voice pendant base de...</b></span>
            <svg class="radio" viewBox="0 0 32 32"><circle cx="16" cy="16" r="14" fill="#fff" stroke="#333" stroke-width="3" /><circle cx="16" cy="16" r="6" fill="#333" /></svg>
          </div>
        </li>
        <li v-for="n in nodes" :key="n.label">
          <svg class="twisty" viewBox="0 0 24 34"><path d="M2 2H6L22 17L6 32H2Z" fill="#e9e9ec" stroke="#3d3d3d" stroke-width="3" /></svg>
          <div class="node">
            <svg v-if="n.bulb" class="ico bulb"><use :href="'#b-' + n.bulb" /></svg>
            <svg class="ico"><use :href="'#b-' + n.icon" /></svg>
            <span class="name">{{ n.label }}</span>
          </div>
        </li>
      </ul>

      <div class="bottom">
        <section class="panel comments">
          <h2>COMMENTS</h2>
          <button class="round" aria-label="Add comment"><svg width="24" height="24" viewBox="0 0 24 24"><circle cx="12" cy="12" r="12" fill="#2f2f2f" /><path d="M5 12H19M12 5V19" stroke="#ddd" stroke-width="3" /></svg></button>
          <span class="handle"></span>
        </section>
        <nav class="navbar" aria-label="Navigation">
          <button class="orbit" aria-label="Orbit"><svg viewBox="0 0 40 40"><path d="M10 26Q0 24 1 19Q2 14 8 13M12 18Q12 1 19 1Q25 1 26 12M30 14Q40 16 39 21Q37 27 14 27M26 30Q25 39 19 39Q13 39 12 32" fill="none" stroke="#4c5258" stroke-width="3" /><path d="M19 14V24M14 19H24" stroke="#1a7ce0" stroke-width="4" /><path d="M24 6V14M20 10H28M31 11V17M28 14H34" stroke="#3c4046" stroke-width="3" /></svg><i class="caret"></i></button>
          <button aria-label="Look at"><svg viewBox="0 0 40 40"><path d="M5 12L14 2V6L20 4V8L32 5L34 12Z" fill="#b9bcc0" stroke="#555a60" stroke-width="2" /><rect x="1" y="13" width="38" height="26" fill="#f5f5f7" stroke="#484c52" stroke-width="2.5" /><rect x="8" y="20" width="23" height="11" fill="#b6b9c6" stroke="#484c52" stroke-width="2.5" /></svg></button>
          <button aria-label="Pan"><svg viewBox="0 0 40 40"><path d="M13 38Q10 30 2 22Q0 17 6 18L12 24L7 8Q8 4 12 8L17 18L17 5Q19 0 22 4L23 17L27 4Q31 2 31 7L29 20L34 13Q39 10 39 15Q36 30 29 38Z" fill="#f2f2f4" stroke="#4a5058" stroke-width="2.5" /></svg></button>
          <button aria-label="Zoom"><svg viewBox="0 0 40 40"><circle cx="13" cy="17" r="12" fill="url(#gLens)" stroke="#5a6068" stroke-width="2.5" /><path d="M21 26L31 37" stroke="#3c4350" stroke-width="6" /><path d="M34 0V13M28 6H40M28 17H40" stroke="#3c4046" stroke-width="3" /></svg></button>
          <button class="fit" aria-label="Fit"><svg viewBox="0 0 40 40"><path d="M1 1H39V39H1Z" fill="none" stroke="#444" stroke-width="2.5" stroke-dasharray="6 6" /><circle cx="17" cy="17" r="15" fill="url(#gLens)" stroke="#5a6068" stroke-width="2.5" /><path d="M27 27L38 38" stroke="#3c3c3c" stroke-width="8" /></svg><i class="caret"></i></button>
          <button class="display" aria-label="Display settings"><svg viewBox="0 0 40 40"><rect x="1" y="1" width="38" height="30" fill="#f2f2f2" stroke="#555" stroke-width="2.5" /><rect x="6" y="6" width="28" height="20" fill="#9bbbe4" stroke="#2f4a80" stroke-width="3" /><path d="M14 32H26L29 39H11Z" fill="#e2e4e8" stroke="#555" stroke-width="2" /></svg><i class="caret"></i></button>
          <button class="display" aria-label="Grid and snaps"><svg viewBox="0 0 40 40"><rect x="1" y="1" width="38" height="38" fill="url(#gSteel)" stroke="#555" stroke-width="2.5" /><path d="M9 1V39M16 1V39M24 1V39M31 1V39M1 9H39M1 16H39M1 24H39M1 31H39" stroke="#777a82" stroke-width="3" /></svg><i class="caret"></i></button>
          <button class="display" aria-label="Viewports"><svg viewBox="0 0 40 40"><path d="M2 4H19V19H2ZM21 4H38V19H21ZM2 21H19V36H2ZM21 21H38V36H21Z" fill="#9bbbe4" stroke="#2f4a80" stroke-width="2.5" /><path d="M7 9H14V14H7ZM26 9H33V14H26ZM7 26H14V31H7ZM26 26H33V31H26Z" fill="none" stroke="#5f86bd" stroke-width="2" /></svg><i class="caret"></i></button>
        </nav>
      </div>

      <aside class="getting">
        <button class="getting-top" aria-label="Expand"><svg width="26" height="16" viewBox="0 0 26 16"><path d="M0 8L13 0V16ZM12 8L25 0V16Z" fill="#333" /></svg></button>
        <span>GETTING STARTED</span>
        <i class="getting-end"></i>
      </aside>
    </main>

    <footer class="timeline">
      <div class="thumb"></div>
      <div class="playback"><button v-for="p in playback" :key="p" :aria-label="p"><svg><use :href="'#p-' + p" /></svg></button></div>
      <div class="track">
        <ol><li v-for="(f, i) in features" :key="i"><svg><use :href="'#t-' + f" /></svg></li></ol>
        <div class="rail"><i class="dot"></i><i class="dot wide"></i><i class="bar"></i><i class="dot wide"></i><i class="dot"></i></div>
      </div>
      <button class="settings" aria-label="Timeline settings"><svg><use href="#b-gear" /></svg></button>
    </footer>
  </div>
</template>

<style>
body { margin: 0; }
</style>

<style scoped>
* { box-sizing: border-box; }
button { border: 0; padding: 0; margin: 0; background: none; font: inherit; color: inherit; display: flex; align-items: center; }
svg { display: block; flex: none; }
h1, h2, ul, ol { margin: 0; padding: 0; font-weight: 400; list-style: none; }
.defs { position: absolute; width: 0; height: 0; }
.app { display: flex; flex-direction: column; min-height: 100vh; font-family: "Liberation Sans", Arial, sans-serif; font-size: 26px; color: #3a3a3a; background: #f0f0f0; }
.caret { flex: none; border: 7px solid transparent; border-top: 10px solid #333; border-bottom: 0; }

.titlebar { display: flex; align-items: center; height: 59px; padding-left: 2px; background: #0099bd; border-bottom: 1px solid #7ba8b8; color: #fff; }
.logo { width: 40px; height: 40px; }
.titlebar h1 { flex: 1; padding: 3px 0 0 6px; font-family: "Open Sans", "Noto Sans", sans-serif; font-size: 28px; line-height: 40px; }
.window-buttons { display: flex; gap: 96px; padding-right: 51px; }
.window-buttons svg { width: 20px; height: 20px; }

.tabs { display: flex; align-items: flex-end; gap: 6px; height: 96px; padding-left: 52px; background: #56728c; }
.tab { display: flex; align-items: center; width: 495px; height: 77px; padding: 0 24px; border-radius: 8px 8px 0 0; background: #f3f3f5; }
.cube { width: 42px; height: 40px; margin-bottom: 8px; }
.tab-name { flex: 1; padding: 6px 0 0 24px; font-size: 30px; font-weight: 700; color: #666; white-space: nowrap; }
.sync { width: 26px; height: 26px; margin: 0 20px 32px 0; }
.tab-close svg { width: 24px; height: 24px; }
.tab-add { justify-content: center; width: 74px; height: 77px; border-radius: 8px 8px 0 0; background: #455a70; }
.tab-add svg { width: 28px; height: 28px; }

.toolbar { display: flex; align-items: center; height: 67px; padding-left: 30px; border-bottom: 2px solid #e6e6e6; background: #f1f1f1; }
.tool .caret { margin-left: 16px; }
.file { margin-left: 60px; }
.save { margin-left: 62px; }
.undo { margin-left: 62px; }
.redo { margin-left: 37px; }
.account { display: flex; align-items: center; height: 100%; margin-left: auto; padding-right: 33px; }
.subscribe { justify-content: center; width: 272px; height: 65px; background: #faa21b; color: #fff; font-size: 28px; }
.clock { margin: 0 72px 0 31px; }
.help { margin-left: 64px; }
.help .caret { margin-left: 10px; }

.stage { position: relative; flex: 1; display: flex; flex-direction: column; align-items: flex-start; overflow: hidden; }
.scene { position: absolute; inset: 0; width: 100%; height: 100%; }
.viewcube { position: absolute; top: 0; right: 0; width: 280px; height: 280px; }
.stage > section, .tree, .bottom { position: relative; }

.ribbon { display: flex; height: 150px; margin: 11px 0 0 10px; background: #f1f1f1; }
.workspace { display: flex; align-items: center; width: 267px; padding-left: 15px; }
.grip { width: 12px; height: 58px; border: solid #bdbdbd; border-width: 0 2px; margin-top: 16px; }
.model { margin: 5px 0 0 59px; font-weight: 700; gap: 14px; }
.group { position: relative; display: flex; flex-direction: column; align-items: center; }
.group::before { content: ""; position: absolute; left: 0; top: 6px; width: 3px; height: 138px; background: #dcdcdc; }
.group-icons { display: flex; height: 95px; margin-top: 5px; padding-left: 3px; }
.big { justify-content: center; width: 108px; height: 95px; }
.big svg { width: 80px; height: 80px; margin-top: -5px; }
.big.active { width: 95px; background: #0996d8; }
.group-label { gap: 10px; height: 32px; margin-top: 16px; padding-right: 4px; font-size: 24px; white-space: nowrap; }

.panel { display: flex; align-items: center; width: 750px; height: 63px; margin-left: 10px; border: 2px solid #ccc; background: #f1f1f1; }
.panel h2 { flex: 1; font-size: 24px; color: #666; }
.browser { margin-top: 10px; padding-left: 11px; }
.browser h2 { padding-left: 25px; }
.handle { width: 8px; height: 28px; margin: 0 4px 0 15px; border: solid #888; border-width: 0 2px; }

.tree { padding-top: 13px; }
.tree li { display: flex; align-items: center; height: 49px; margin-bottom: 11px; padding-left: 99px; }
.tree .root { padding-left: 52px; }
.open { width: 28px; height: 30px; margin-right: 20px; }
.twisty { width: 25px; height: 35px; margin-right: 21px; }
.node { display: flex; align-items: center; height: 49px; padding: 0 32px 0 8px; background: #f1f1f1; }
.ico { width: 40px; height: 40px; }
.bulb { margin-right: 22px; }
.name { padding-left: 35px; white-space: nowrap; }
.root .node { padding-right: 18px; }
.chosen { display: flex; align-items: center; width: 525px; height: 41px; margin: 0 10px 0 14px; padding-left: 8px; background: #999; color: #fff; }
.chosen b { padding-left: 35px; font-size: 28px; white-space: nowrap; }
.radio { width: 32px; height: 32px; }

.bottom { display: grid; grid-template-columns: 1fr auto 1fr; align-items: end; width: 100%; margin-top: auto; padding-bottom: 10px; }
.comments { padding-left: 62px; border-top: 0; }
.navbar { display: flex; align-items: center; height: 60px; padding: 0 18px 0 8px; gap: 25px; margin-bottom: 1px; background: #f1f1f1; }
.navbar svg { width: 40px; height: 40px; }
.navbar .caret { margin-left: 6px; }
.navbar .orbit { margin-right: -10px; }
.navbar .orbit .caret, .navbar .fit .caret { margin-left: 13px; }
.navbar .fit { margin-right: 10px; }
.navbar .display { margin-right: -7px; }

.getting { position: absolute; top: 461px; right: 10px; display: flex; flex-direction: column; align-items: center; width: 55px; height: 458px; background: #f1f1f1; }
.getting-top { justify-content: center; width: 55px; height: 45px; padding: 8px 4px 0 0; background: #cbcbcb; }
.getting span { flex: 1; padding: 4px 2px 0 0; writing-mode: vertical-rl; font-family: "DejaVu Sans", sans-serif; font-size: 24px; line-height: 32px; }
.getting-end { width: 55px; height: 26px; background: #cbcbcb; }

.timeline { position: relative; display: flex; height: 124px; border-top: 5px solid #cbcbcb; background: #f1f1f1; }
.thumb { position: absolute; top: 0; right: 12%; width: 782px; height: 15px; border-radius: 0 0 8px 8px; background: #cbcbcb; }
.playback { display: flex; gap: 22px; height: 40px; margin: 50px 0 0 22px; }
.playback svg, .settings svg { width: 40px; height: 40px; }
.track { display: flex; flex-direction: column; margin: 37px 0 0 33px; }
.track ol { display: flex; padding: 0 12px; }
.track li { display: flex; flex-direction: column; align-items: center; width: 60px; height: 60px; }
.track li svg { width: 40px; height: 41px; }
.track li::after { content: ""; width: 4px; height: 12px; margin-top: 7px; background: #cbcbcb; }
.rail { display: flex; gap: 5px; height: 5px; }
.rail i { background: #cbcbcb; }
.dot { width: 7px; }
.dot.wide { width: 10px; }
.bar { flex: 1; }
.settings { height: 40px; margin: 50px 22px 0 auto; }
</style>
